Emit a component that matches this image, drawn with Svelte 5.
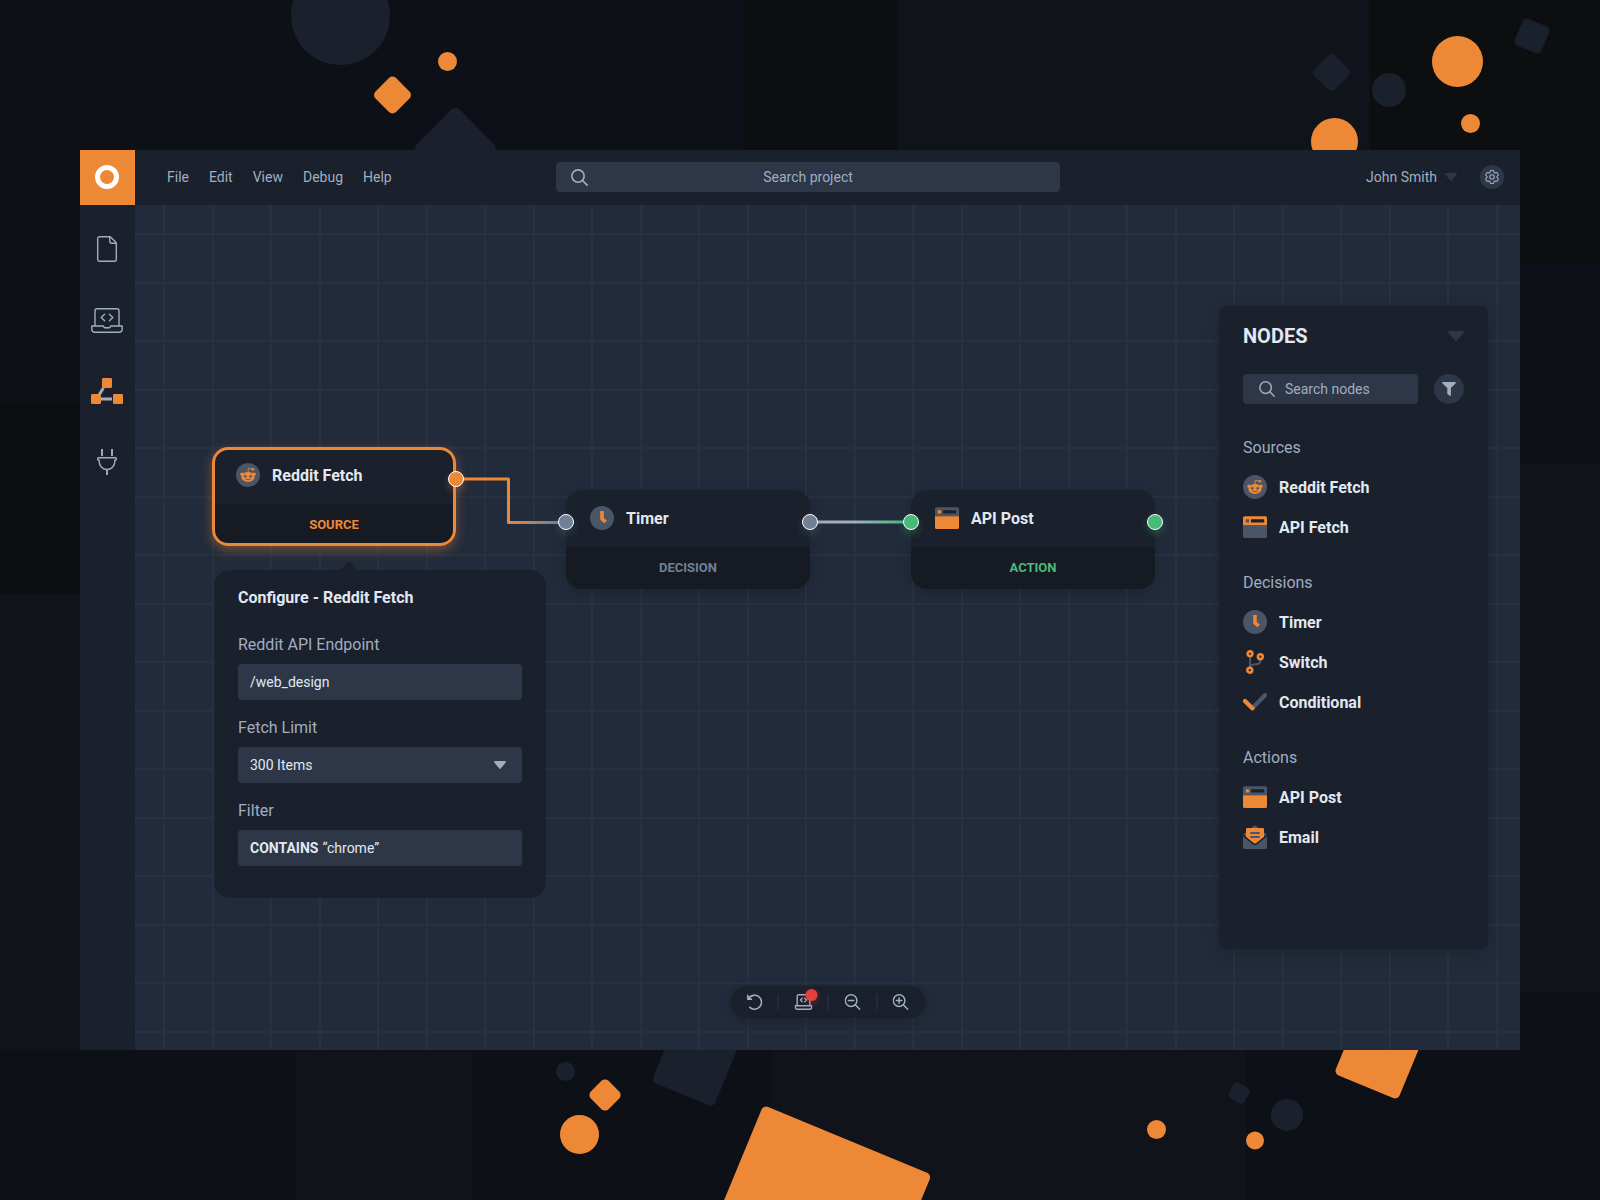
<script>
  const menus = ['File', 'Edit', 'View', 'Debug', 'Help'];

  const tools = [
    { icon: 'file', label: 'Files' },
    { icon: 'laptop', label: 'Code' },
    { icon: 'graph', label: 'Node graph' },
    { icon: 'plug', label: 'Plugins' }
  ];

  const groups = [
    {
      title: 'Sources',
      items: [
        { icon: 'reddit', name: 'Reddit Fetch' },
        { icon: 'apiFetch', name: 'API Fetch' }
      ]
    },
    {
      title: 'Decisions',
      items: [
        { icon: 'timer', name: 'Timer' },
        { icon: 'switch', name: 'Switch' },
        { icon: 'check', name: 'Conditional' }
      ]
    },
    {
      title: 'Actions',
      items: [
        { icon: 'apiPost', name: 'API Post' },
        { icon: 'email', name: 'Email' }
      ]
    }
  ];

  const nodes = [
    { icon: 'reddit', name: 'Reddit Fetch', kind: 'source', x: 77, y: 242, input: false, selected: true },
    { icon: 'timer', name: 'Timer', kind: 'decision', x: 431, y: 285, input: true, selected: false },
    { icon: 'apiPost', name: 'API Post', kind: 'action', x: 776, y: 285, input: true, selected: false }
  ];

  let endpoint = $state('/web_design');
  let limit = $state('300 Items');
  let filter = $state('“chrome”');
</script>

{#snippet caret(w, h)}
  <svg class="caret" width={w} height={h} viewBox="0 0 16 10" preserveAspectRatio="none" aria-hidden="true">
    <path d="M1.2 0h13.6c1 0 1.5 1 .8 1.8L9 9.3c-.6.8-1.4.8-2 0L.4 1.8C-.3 1 .2 0 1.2 0Z" fill="currentColor" />
  </svg>
{/snippet}

{#snippet magnifier(size, sign)}
  <svg width={size} height={size} viewBox="0 0 16 16" fill="none" stroke="currentColor" stroke-width="1.5" stroke-linecap="round" aria-hidden="true">
    <circle cx="6.6" cy="6.6" r="5.8" />
    <path d="m10.8 10.8 4.4 4.4" />
    {#if sign}<path d="M3.9 6.6h5.4" />{/if}
    {#if sign === 'plus'}<path d="M6.6 3.9v5.4" />{/if}
  </svg>
{/snippet}

{#snippet toolIcon(name)}
  {#if name === 'file'}
    <svg width="20" height="26" viewBox="0 0 20 26" fill="none" stroke="currentColor" stroke-width="1.4" stroke-linejoin="round" aria-hidden="true">
      <path d="M2.7.7h10.6l6 6v16.6q0 2-2 2H2.7q-2 0-2-2V2.7q0-2 2-2Z" />
      <path d="M12.8.8v4.4q0 2 2 2h4.4" />
    </svg>
  {:else if name === 'laptop'}
    <svg width="32" height="25" viewBox="0 0 32 25" fill="none" stroke="currentColor" stroke-width="1.4" stroke-linecap="round" stroke-linejoin="round" aria-hidden="true">
      <path d="M4 17.5V2.7Q4 .8 5.9.8h20.2q1.9 0 1.9 1.9v14.8" />
      <path d="M.8 18h11.4l1.2 1.7h5.2l1.2-1.7h11.4v3q0 3.2-3.2 3.2H4Q.8 24.2.8 21Z" />
      <path d="m13.6 6.3-3.4 3.2 3.4 3.2M18.4 6.3l3.4 3.2-3.4 3.2" />
    </svg>
  {:else if name === 'graph'}
    <svg width="32" height="26" viewBox="0 0 32 26" aria-hidden="true">
      <path d="m8 17 4.4-7M9 21h12" stroke="#a0aec0" stroke-width="3" />
      <g fill="#ed8936">
        <rect x="11" width="10" height="10" rx="1.3" />
        <rect y="16" width="10" height="10" rx="1.3" />
        <rect x="22" y="16" width="10" height="10" rx="1.3" />
      </g>
    </svg>
  {:else}
    <svg width="20" height="26" viewBox="0 0 20 26" fill="none" stroke="currentColor" stroke-width="1.4" stroke-linejoin="round" aria-hidden="true">
      <path d="M5 0v7M15 0v7M10 20.5V26" stroke-width="1.9" />
      <path d="M1.5 8.7h17q.8 0 .8.8v.8q0 .9-.9.9h-.6v1.300c0 4.500-3.500 8-7.800 8s-7.800-3.500-7.800-8v-1.300h-.6q-.9 0-.9-.9v-.8q0-.8.8-.8Z" />
    </svg>
  {/if}
{/snippet}

{#snippet browser(top, body)}
  <svg width="24" height="24" viewBox="0 0 24 24" aria-hidden="true">
    <path d="M1.5 1.3h21q1.5 0 1.5 1.5v7.7H0V2.8q0-1.5 1.5-1.5Z" fill={top} />
    <path d="M0 10.2h24v11.300q0 1.500-1.500 1.500h-21Q0 23 0 21.500Z" fill={body} />
    <rect x="2.8" y="4.3" width="3.3" height="3.3" rx=".5" fill={body} />
    <rect x="8" y="4.3" width="13.2" height="3.2" rx=".5" fill="#1a202c" />
  </svg>
{/snippet}

{#snippet nodeIcon(name)}
  {#if name === 'apiFetch'}
    {@render browser('#ed8936', '#4a5568')}
  {:else if name === 'apiPost'}
    {@render browser('#4a5568', '#ed8936')}
  {:else}
    <svg width="24" height="24" viewBox="0 0 24 24" aria-hidden="true">
      {#if name === 'reddit'}
        <circle cx="12" cy="12" r="12" fill="#4a5568" />
        <path d="M12.2 9.5V6q0-.7.7-.6l3.2.7" fill="none" stroke="#ed8936" stroke-width=".9" />
        <g fill="#ed8936">
          <circle cx="17" cy="6.2" r="1.3" />
          <circle cx="6" cy="11.2" r="1.7" />
          <circle cx="18" cy="11.2" r="1.7" />
          <ellipse cx="12" cy="14" rx="6.6" ry="4.9" />
        </g>
        <g fill="#4a5568">
          <circle cx="9.3" cy="13.2" r="1.2" />
          <circle cx="14.7" cy="13.2" r="1.2" />
        </g>
        <path d="M9.3 16q2.700 1.700 5.400 0" fill="none" stroke="#4a5568" stroke-width=".8" stroke-linecap="round" />
      {:else if name === 'timer'}
        <circle cx="12" cy="12" r="12" fill="#4a5568" />
        <path d="M12 5v7.800l3.600 3" fill="none" stroke="#ed8936" stroke-width="3.6" stroke-linejoin="round" />
      {:else if name === 'switch'}
        <path d="M7 6v13M17.3 9v1.5q0 3.5-4 3.8-5.3.3-6.3 2" fill="none" stroke="#4a5568" stroke-width="2" />
        <g fill="#1a202c" stroke="#ed8936" stroke-width="2.6">
          <circle cx="7" cy="3.8" r="2.4" />
          <circle cx="17.3" cy="6.7" r="2.4" />
          <circle cx="6.8" cy="20.2" r="2.4" />
        </g>
      {:else if name === 'check'}
        <path d="M9.5 18 22 5.2" stroke="#4a5568" stroke-width="4.4" stroke-linecap="round" />
        <path d="m2 11 7.3 7.3" stroke="#ed8936" stroke-width="4.4" stroke-linecap="round" />
      {:else}
        <path d="m0 9.6 3-2.3L10.5 1q1.5-1.2 3 0L21 7.3l3 2.3L12 19Z" fill="#4a5568" />
        <path d="M3 4.2Q3 3 4.2 3h15.600Q21 3 21 4.200v8.300l-7.600 5.400q-1.400 1-2.800 0L3 12.500Z" fill="#ed8936" />
        <path d="M8 8h8M8 12h8" stroke="#4a5568" stroke-width="1.9" stroke-linecap="round" />
        <path d="m0 10.400 10.200 8.300q1.800 1.300 3.600 0L24 10.400" fill="none" stroke="#1a202c" stroke-width="1.4" />
        <path d="m0 11.600 10.200 7.900q1.800 1.300 3.600 0L24 11.600v11q0 1.400-1.400 1.400H1.400Q0 24 0 22.600Z" fill="#4a5568" />
      {/if}
    </svg>
  {/if}
{/snippet}

<div class="stage">
  <svg class="backdrop" viewBox="0 0 1600 1200" preserveAspectRatio="xMidYMid slice" aria-hidden="true">
    <rect width="1600" height="1200" fill="#0d1017" />
    <g fill="#0d0e10">
      <rect x="745" width="152" height="180" />
      <rect x="1370" width="230" height="262" />
      <rect y="403" width="90" height="191" />
    </g>
    <g fill="#10131a">
      <rect x="897" width="473" height="180" />
      <rect x="1510" y="464" width="90" height="528" />
      <rect y="594" width="90" height="456" />
      <rect x="296" y="1040" width="177" height="160" />
      <rect x="773" y="1040" width="473" height="160" />
    </g>
    <g fill="#1a202c">
      <circle cx="340.5" cy="15.5" r="49.5" />
      <rect x="-30" y="-30" width="60" height="60" rx="5" transform="translate(455.5 148) rotate(45)" />
      <rect x="-14.5" y="-14.5" width="29" height="29" rx="5" transform="translate(1331.5 72.5) rotate(45)" />
      <circle cx="1389" cy="90" r="17" />
      <rect x="-14.5" y="-14.5" width="29" height="29" rx="5" transform="translate(1532 36) rotate(22.5)" />
      <circle cx="565.5" cy="1071.5" r="9.5" />
      <rect y="-67" width="67" height="67" rx="5" transform="translate(651.5 1081.5) rotate(22.5)" />
      <rect x="-9" y="-9" width="18" height="18" rx="5" transform="translate(1239 1093) rotate(30)" />
      <circle cx="1287" cy="1115" r="16" />
    </g>
    <g fill="#ed8936">
      <circle cx="447.5" cy="61.5" r="9.5" />
      <rect x="-14.5" y="-14.5" width="29" height="29" rx="5" transform="translate(392.5 95) rotate(45)" />
      <circle cx="1457.5" cy="61.5" r="25.5" />
      <circle cx="1470.5" cy="123.5" r="9.5" />
      <circle cx="1334.5" cy="141.5" r="23.5" />
      <rect x="-12.5" y="-12.5" width="25" height="25" rx="5" transform="translate(605 1095) rotate(45)" />
      <circle cx="579.5" cy="1134.5" r="19.5" />
      <rect width="182" height="182" rx="5" transform="translate(763.5 1105) rotate(22.5)" />
      <rect y="-69" width="69" height="69" rx="5" transform="translate(1334 1073.5) rotate(22.5)" />
      <circle cx="1156.5" cy="1129.5" r="9.5" />
      <circle cx="1255" cy="1140.5" r="9" />
    </g>
  </svg>

  <div class="window">
    <header>
      <a class="logo" href="#home" aria-label="Home"><span class="ring"></span></a>
      <div class="bar">
        <nav aria-label="Main menu">
          {#each menus as menu}
            <button type="button">{menu}</button>
          {/each}
        </nav>
        <label class="search project">
          {@render magnifier(17)}
          <input type="text" placeholder="Search project" aria-label="Search project" />
        </label>
        <div class="account">
          <button type="button" class="user">John Smith {@render caret(12, 8)}</button>
          <button type="button" class="round gear" aria-label="Settings">
            <svg width="16" height="16" viewBox="1 1 22 22" fill="none" stroke="currentColor" stroke-width="1.5" stroke-linejoin="round" aria-hidden="true">
              <path d="M9.594 3.94c.09-.542.56-.94 1.11-.94h2.593c.55 0 1.02.398 1.11.94l.213 1.281c.063.374.313.686.645.87.074.04.147.083.22.127.325.196.72.257 1.075.124l1.217-.456a1.125 1.125 0 0 1 1.37.49l1.296 2.247a1.125 1.125 0 0 1-.26 1.431l-1.003.827c-.293.241-.438.613-.43.992a7.723 7.723 0 0 1 0 .255c-.008.378.137.75.43.991l1.004.827c.424.35.534.955.26 1.43l-1.298 2.247a1.125 1.125 0 0 1-1.369.491l-1.217-.456c-.355-.133-.75-.072-1.076.124a6.47 6.47 0 0 1-.22.128c-.331.183-.581.495-.644.869l-.213 1.281c-.09.543-.56.94-1.11.94h-2.594c-.55 0-1.019-.398-1.11-.94l-.213-1.281c-.062-.374-.312-.686-.644-.87a6.52 6.52 0 0 1-.22-.127c-.325-.196-.72-.257-1.076-.124l-1.217.456a1.125 1.125 0 0 1-1.369-.49l-1.297-2.247a1.125 1.125 0 0 1 .26-1.431l1.004-.827c.292-.24.437-.613.43-.991a6.932 6.932 0 0 1 0-.255c.007-.38-.138-.751-.43-.992l-1.004-.827a1.125 1.125 0 0 1-.26-1.43l1.297-2.247a1.125 1.125 0 0 1 1.37-.491l1.216.456c.356.133.751.072 1.076-.124.072-.044.146-.086.22-.128.332-.183.582-.495.644-.869l.214-1.28Z" />
              <circle cx="12" cy="12" r="3" />
            </svg>
          </button>
        </div>
      </div>
    </header>

    <div class="workspace">
      <aside class="sidebar" aria-label="Tools">
        {#each tools as tool}
          <button type="button" aria-label={tool.label}>{@render toolIcon(tool.icon)}</button>
        {/each}
      </aside>

      <main class="canvas">
        <svg class="wires" fill="none" stroke-width="3" aria-hidden="true">
          <defs>
            <linearGradient id="to-decision" gradientUnits="userSpaceOnUse" x1="370" y1="0" x2="424" y2="0">
              <stop offset="0" stop-color="#ed8936" />
              <stop offset="1" stop-color="#718096" />
            </linearGradient>
            <linearGradient id="to-action" gradientUnits="userSpaceOnUse" x1="683" y1="0" x2="768" y2="0">
              <stop offset="0" stop-color="#a0aec0" />
              <stop offset=".45" stop-color="#a0aec0" />
              <stop offset="1" stop-color="#48bb78" />
            </linearGradient>
          </defs>
          <path d="M321 274h52.500v43.500H431" stroke="url(#to-decision)" stroke-linejoin="round" />
          <path d="M675 317h101v.01" stroke="url(#to-action)" />
        </svg>

        {#each nodes as node}
          <article class="node {node.kind}" class:selected={node.selected} style="left: {node.x}px; top: {node.y}px">
            <div class="head">
              {@render nodeIcon(node.icon)}
              <h3>{node.name}</h3>
            </div>
            <div class="kind">{node.kind.toUpperCase()}</div>
            {#if node.input}<span class="port in"></span>{/if}
            <span class="port out"></span>
          </article>
        {/each}

        <form class="configure" onsubmit={(e) => e.preventDefault()}>
          <h3>Configure - Reddit Fetch</h3>
          <div class="fields">
            <div class="row">
              <label for="endpoint">Reddit API Endpoint</label>
              <div class="field"><input id="endpoint" type="text" bind:value={endpoint} /></div>
            </div>
            <div class="row">
              <label for="limit">Fetch Limit</label>
              <div class="field">
                <select id="limit" bind:value={limit}>
                  <option>100 Items</option>
                  <option>200 Items</option>
                  <option>300 Items</option>
                </select>
                {@render caret(12, 8)}
              </div>
            </div>
            <div class="row">
              <label for="filter">Filter</label>
              <div class="field"><b>CONTAINS</b><input id="filter" type="text" bind:value={filter} /></div>
            </div>
          </div>
        </form>

        <section class="palette" aria-label="Nodes">
          <div class="title">
            <h2>NODES</h2>
            <button type="button" aria-label="Collapse">{@render caret(16, 10)}</button>
          </div>
          <div class="tools">
            <label class="search">
              {@render magnifier(16)}
              <input type="text" placeholder="Search nodes" aria-label="Search nodes" />
            </label>
            <button type="button" class="round filter" aria-label="Filter nodes">
              <svg width="14" height="14" viewBox="0 0 14 14" aria-hidden="true">
                <path d="M.6 0h12.8q.8.4.3 1.2L8.9 6v7.3q-.2.9-1 .5L5.3 12V6L.3 1.2Q-.2.4.6 0Z" fill="currentColor" />
              </svg>
            </button>
          </div>
          {#each groups as group}
            <div class="group">
              <h4>{group.title}</h4>
              <ul>
                {#each group.items as item}
                  <li><button type="button">{@render nodeIcon(item.icon)}{item.name}</button></li>
                {/each}
              </ul>
            </div>
          {/each}
        </section>

        <div class="toolbar" role="toolbar" aria-label="Canvas tools">
          <button type="button" aria-label="Undo">
            <svg width="16" height="16" viewBox="0 0 16 16" fill="none" stroke="currentColor" stroke-width="1.6" stroke-linecap="round" stroke-linejoin="round" aria-hidden="true">
              <path d="M2 4.6A7 7 0 1 1 3.3 13.4" />
              <path d="M.9 1.3v4.2h4.3Z" fill="currentColor" stroke-width="1" />
            </svg>
          </button>
          <i></i>
          <button type="button" class="console" aria-label="Console, new output">
            <svg width="18" height="16" viewBox="0 0 18 16" fill="none" stroke="currentColor" stroke-width="1.4" stroke-linecap="round" stroke-linejoin="round" aria-hidden="true">
              <path d="M2.7 11V2.2Q2.7.8 4.1.8h9.8q1.4 0 1.4 1.4V11" />
              <path d="M.8 11.8h16.4v1.4q0 2-2 2H2.8q-2 0-2-2Z" />
              <path d="M7.7 4.2 6 6l1.700 1.800M10.300 4.200 12 6l-1.700 1.800" />
            </svg>
            <span class="badge"></span>
          </button>
          <i></i>
          <button type="button" aria-label="Zoom out">{@render magnifier(16, 'minus')}</button>
          <i></i>
          <button type="button" aria-label="Zoom in">{@render magnifier(16, 'plus')}</button>
        </div>
      </main>
    </div>
  </div>
</div>

<style>
  :global(body) {
    margin: 0;
    background: #0d1017;
  }

  .stage,
  .stage * {
    box-sizing: border-box;
  }

  .stage {
    position: relative;
    display: flex;
    min-height: 100vh;
    padding: 150px 80px;
    overflow: hidden;
    font-family: Roboto, 'Liberation Sans', sans-serif;
    font-size: 14px;
    line-height: 20px;
    color: #a0aec0;
  }

  .backdrop {
    position: absolute;
    inset: 0;
    width: 100%;
    height: 100%;
  }

  svg {
    display: block;
    flex: none;
  }

  h2,
  h3,
  h4,
  ul {
    margin: 0;
    padding: 0;
    list-style: none;
  }

  button,
  input,
  select {
    margin: 0;
    padding: 0;
    border: 0;
    background: none;
    color: inherit;
    font: inherit;
    appearance: none;
    outline: none;
  }

  button {
    cursor: pointer;
  }

  input {
    flex: 1;
    min-width: 0;
  }

  input::placeholder {
    color: #a0aec0;
    opacity: 1;
  }

  .window {
    position: relative;
    display: flex;
    flex: 1;
    flex-direction: column;
    min-width: 0;
  }

  header {
    display: flex;
    height: 55px;
    background: #1a202c;
  }

  .logo {
    width: 55px;
    padding: 15px;
    background: #ed8936;
  }

  .ring {
    display: block;
    width: 24px;
    height: 24px;
    border: 5px solid #fff;
    border-radius: 50%;
  }

  .bar {
    display: grid;
    flex: 1;
    grid-template-columns: 421fr 504fr 460fr;
    align-items: center;
    padding-bottom: 1px;
  }

  nav {
    display: flex;
    gap: 20px;
    padding-left: 32px;
  }

  .search {
    display: flex;
    align-items: center;
    height: 30px;
    border-radius: 4px;
    background: #2d3748;
  }

  .project {
    padding: 0 32px 0 15px;
  }

  .project input {
    text-align: center;
  }

  .account {
    display: flex;
    align-items: center;
    justify-content: flex-end;
    gap: 23px;
    padding-right: 16px;
  }

  .user {
    display: flex;
    align-items: center;
    gap: 8px;
  }

  .user .caret {
    color: #2d3748;
  }

  .round {
    display: flex;
    align-items: center;
    justify-content: center;
    border-radius: 50%;
    background: #2d3748;
  }

  .gear {
    width: 24px;
    height: 24px;
  }

  .workspace {
    display: flex;
    flex: 1;
  }

  .sidebar {
    display: flex;
    flex-direction: column;
    gap: 39px;
    width: 55px;
    padding: 28px 11px;
    background: #1a202c;
  }

  .sidebar button {
    display: flex;
    align-items: center;
    justify-content: center;
    width: 32px;
    height: 32px;
  }

  .canvas {
    position: relative;
    display: flex;
    flex: 1;
    justify-content: flex-end;
    min-width: 0;
    padding: 101px 32px;
    background-color: #222b3b;
    background-image:
      linear-gradient(90deg, transparent 28px, #273142 28px, #273142 30px, transparent 30px, transparent 77px, #273142 77px, #273142 79px, transparent 79px),
      linear-gradient(transparent 28px, #273142 28px, #273142 30px, transparent 30px, transparent 77px, #273142 77px, #273142 79px, transparent 79px);
    background-size: 107px 107px;
  }

  .wires {
    position: absolute;
    inset: 0;
    width: 100%;
    height: 100%;
  }

  .node {
    --accent: #718096;
    position: absolute;
    width: 244px;
    border-radius: 16px;
    background: #1a202c;
    box-shadow: 0 4px 12px rgb(0 0 0 / 16%);
  }

  .source {
    --accent: #ed8936;
  }

  .action {
    --accent: #48bb78;
  }

  .selected {
    box-shadow: 0 4px 12px rgb(237 137 54 / 40%);
  }

  .selected::after {
    position: absolute;
    inset: 0;
    border: 3px solid #ed8936;
    border-radius: 16px;
    content: '';
  }

  .head {
    display: flex;
    gap: 12px;
    height: 57px;
    padding: 16px 24px;
  }

  h3 {
    font-size: 16px;
    font-weight: 700;
    line-height: 24px;
    color: #e2e8f0;
  }

  .head h3 {
    line-height: 26px;
  }

  .kind {
    padding: 11px 0;
    border-radius: 0 0 16px 16px;
    background: #161a22;
    color: var(--accent);
    font-size: 13px;
    font-weight: 700;
    text-align: center;
  }

  .port {
    position: absolute;
    z-index: 1;
    top: 24px;
    width: 16px;
    height: 16px;
    border: 1px solid #fff;
    border-radius: 50%;
    background: var(--accent);
    box-shadow: 0 4px 8px color-mix(in srgb, var(--accent) 30%, transparent);
  }

  .in {
    left: -8px;
  }

  .out {
    right: -8px;
  }

  .configure {
    position: absolute;
    top: 365px;
    left: 79px;
    width: 332px;
    padding: 16px 24px 32px;
    border-radius: 16px;
    background: #1a202c;
  }

  .configure::before {
    position: absolute;
    bottom: 100%;
    left: 126px;
    border: 9px solid transparent;
    border-top-width: 0;
    border-bottom-color: #1a202c;
    content: '';
  }

  .fields {
    display: grid;
    gap: 16px;
    margin-top: 23px;
  }

  .row {
    display: grid;
    gap: 7px;
  }

  .row label,
  h4 {
    font-size: 16px;
    font-weight: 400;
    line-height: 24px;
  }

  .field {
    display: flex;
    align-items: center;
    gap: 4px;
    height: 36px;
    padding: 0 12px;
    border-radius: 4px;
    background: #2d3748;
    color: #e2e8f0;
  }

  .field select {
    flex: 1;
  }

  .field .caret {
    margin-right: 4px;
    color: #a0aec0;
  }

  .palette {
    position: relative;
    width: 269px;
    padding: 18px 24px;
    border-radius: 8px;
    background: #1a202c;
    box-shadow: 0 4px 16px rgb(0 0 0 / 16%);
  }

  .title {
    display: flex;
    align-items: center;
    justify-content: space-between;
    color: #2d3748;
  }

  h2 {
    color: #e2e8f0;
    font-size: 20px;
    font-weight: 700;
    line-height: 24px;
  }

  .tools {
    display: flex;
    gap: 16px;
    margin-top: 26px;
  }

  .tools .search {
    flex: 1;
    gap: 10px;
    min-width: 0;
    padding: 0 16px;
  }

  .filter {
    width: 30px;
    height: 30px;
  }

  .group {
    margin-top: 30px;
  }

  .tools + .group {
    margin-top: 32px;
  }

  .group ul {
    display: grid;
    gap: 14px;
    margin-top: 15px;
  }

  .group button {
    display: flex;
    gap: 12px;
    color: #e2e8f0;
    font-size: 16px;
    font-weight: 700;
    line-height: 26px;
  }

  .toolbar {
    position: absolute;
    bottom: 32px;
    left: 50%;
    display: flex;
    align-items: center;
    justify-content: space-between;
    width: 195px;
    height: 32px;
    padding: 0 16px;
    border-radius: 16px;
    background: #1a202c;
    box-shadow: 0 4px 12px rgb(0 0 0 / 16%);
    transform: translateX(-50%);
  }

  .toolbar i {
    width: 1px;
    height: 16px;
    background: #2d3748;
  }

  .console {
    position: relative;
  }

  .badge {
    position: absolute;
    top: -5px;
    right: -5px;
    width: 12px;
    height: 12px;
    border-radius: 50%;
    background: #e53e3e;
    box-shadow: 0 2px 6px rgb(229 62 62 / 40%);
  }
</style>
